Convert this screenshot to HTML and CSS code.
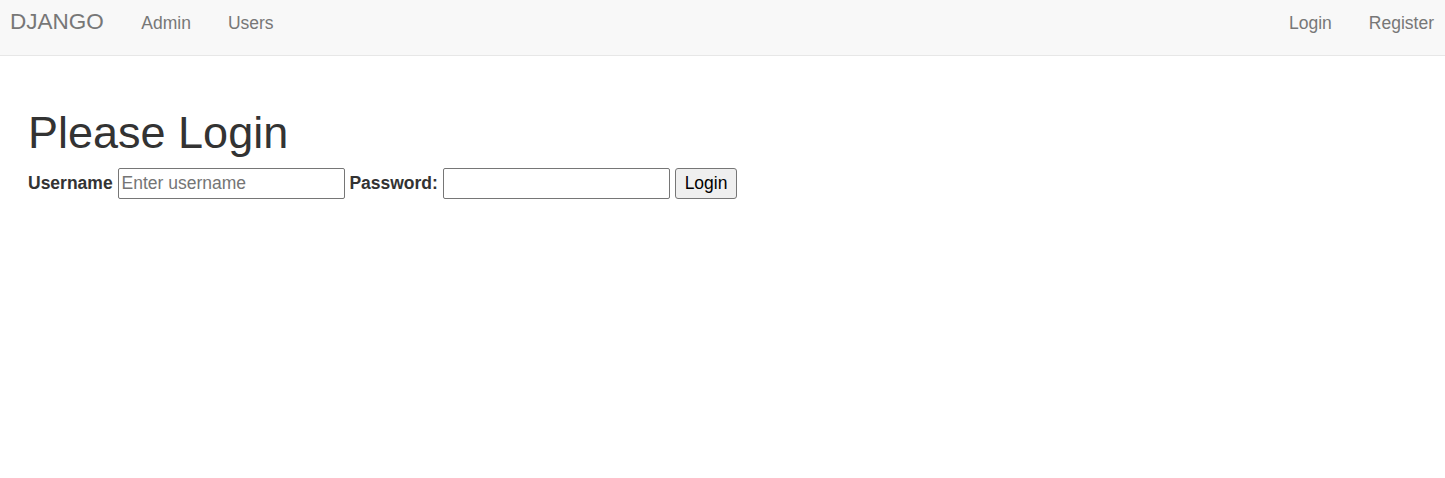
FILE: index.html
```html
<!DOCTYPE html>
<html lang="en">
<head>
<meta charset="utf-8">
<title>Please Login</title>
<link rel="stylesheet" href="styles.css">
</head>
<body>
<nav class="navbar">
  <div class="nav-left">
    <a class="brand" href="#">DJANGO</a>
    <a class="nav-link" href="#">Admin</a>
    <a class="nav-link" href="#">Users</a>
  </div>
  <div class="nav-right">
    <a class="nav-link" href="#">Login</a>
    <a class="nav-link" href="#">Register</a>
  </div>
</nav>
<main class="content">
  <h1 class="title">Please Login</h1>
  <form class="login-form">
    <label class="field-label" for="username">Username</label> <input class="field" id="username" type="text" placeholder="Enter username"> <label class="field-label" for="password">Password:</label> <input class="field" id="password" type="password"> <button class="btn" type="submit">Login</button>
  </form>
</main>
</body>
</html>
```

FILE: styles.css
```css
html, body {
  margin: 0;
  padding: 0;
  background: #ffffff;
}

body {
  font-family: "Liberation Sans", Arial, sans-serif;
  font-size: 17.5px;
  color: #333333;
}

.navbar {
  display: flex;
  justify-content: space-between;
  align-items: flex-start;
  height: 55px;
  background: #f8f8f8;
  border-bottom: 1px solid #e7e7e7;
}

.nav-left,
.nav-right {
  display: flex;
  align-items: flex-start;
}

.nav-right {
  padding-right: 11px;
}

.navbar a {
  color: #777777;
  text-decoration: none;
  display: block;
}

.brand {
  font-size: 22.5px;
  line-height: 25px;
  padding: 9px 19px 0 10px;
}

.nav-link {
  font-size: 17.5px;
  line-height: 25px;
  padding: 11px 18.5px 0;
}

.nav-right .nav-link:last-child {
  padding-right: 0;
}

.content {
  padding: 0 28px;
}

.title {
  font-size: 45px;
  font-weight: 500;
  line-height: 1.1;
  margin: 52px 0 10px;
  color: #333333;
}

.login-form {
  margin: 0;
  line-height: 31px;
}

.field-label {
  font-weight: bold;
  color: #333333;
}

.field {
  box-sizing: border-box;
  width: 227px;
  height: 31px;
  padding: 1px 3px;
  border: 1px solid #767676;
  border-radius: 2px;
  font-family: "Liberation Sans", Arial, sans-serif;
  font-size: 17.5px;
  color: #000000;
  background: #ffffff;
  vertical-align: baseline;
}

.field::placeholder {
  color: #757575;
}

.btn {
  box-sizing: border-box;
  height: 31px;
  padding: 1px 9px;
  border: 1px solid #767676;
  border-radius: 3px;
  background: #efefef;
  font-family: "Liberation Sans", Arial, sans-serif;
  font-size: 17.5px;
  color: #000000;
  vertical-align: baseline;
}
```
